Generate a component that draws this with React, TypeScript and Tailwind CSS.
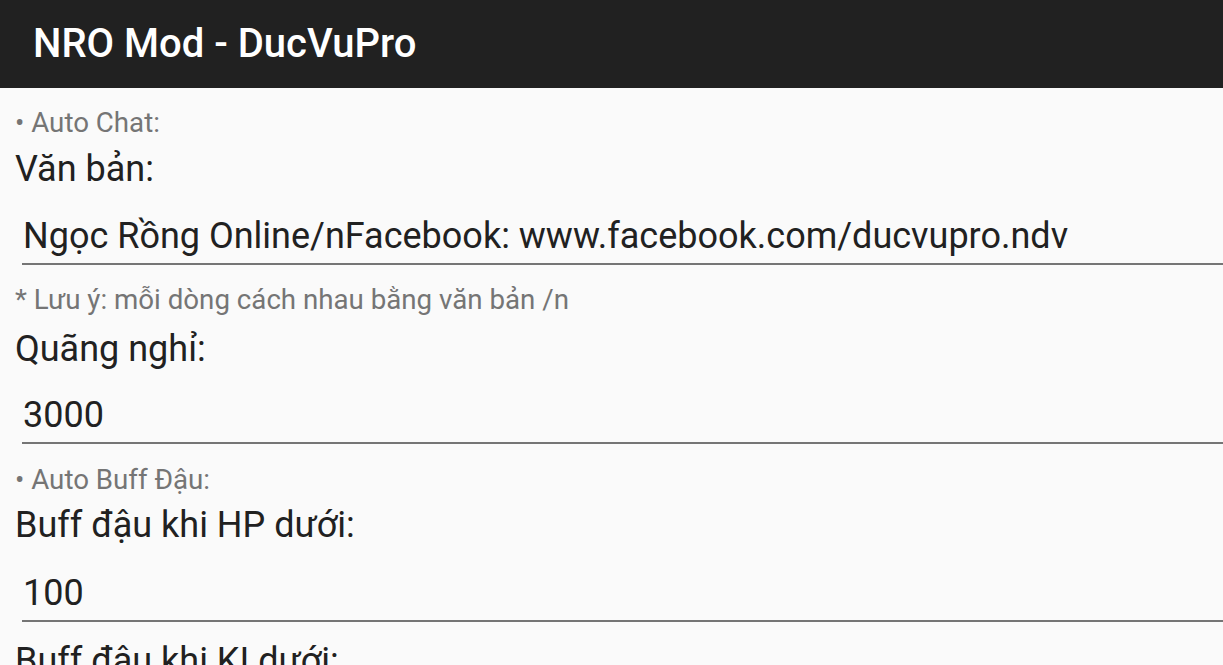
const font = { fontFamily: "Roboto, 'Noto Sans', sans-serif" };

function Section({ text, className }: { text: string; className: string }) {
  return <div className={`${className} text-[27.7px] leading-[32px] text-[#757575]`}>{text}</div>;
}

function Label({ text, className }: { text: string; className: string }) {
  return <div className={`${className} text-[36px] leading-[44px] text-[#212121]`}>{text}</div>;
}

function Field({ value, className }: { value: string; className: string }) {
  return (
    <div
      className={`${className} ml-[7px] -mr-[20px] border-b-2 border-[#757575] pb-[5px] pl-[1px] text-[36px] leading-[44px] text-[#212121]`}
    >
      {value}
    </div>
  );
}

export default function App() {
  return (
    <div className="h-[665px] w-[1223px] overflow-hidden bg-[#fafafa]" style={font}>
      <header className="flex h-[88px] items-center bg-[#212121] px-[33px]">
        <h1 className="text-[40px] font-medium text-white">NRO Mod - DucVuPro</h1>
      </header>
      <main className="pl-[15px]">
        <Section className="mt-[19px]" text="• Auto Chat:" />
        <Label className="mt-[8px]" text="Văn bản:" />
        <Field className="mt-[23px]" value="Ngọc Rồng Online/nFacebook: www.facebook.com/ducvupro.ndv" />
        <div className="mt-[19px] text-[27.7px] leading-[32px] text-[#757575]">
          * Lưu ý: mỗi dòng cách nhau bằng văn bản /n
        </div>
        <Label className="mt-[11px]" text="Quãng nghỉ:" />
        <Field className="mt-[22px]" value="3000" />
        <Section className="mt-[20px]" text="• Auto Buff Đậu:" />
        <Label className="mt-[7px]" text="Buff đậu khi HP dưới:" />
        <Field className="mt-[24px]" value="100" />
        <Label className="mt-[17px]" text="Buff đậu khi KI dưới:" />
      </main>
    </div>
  );
}
